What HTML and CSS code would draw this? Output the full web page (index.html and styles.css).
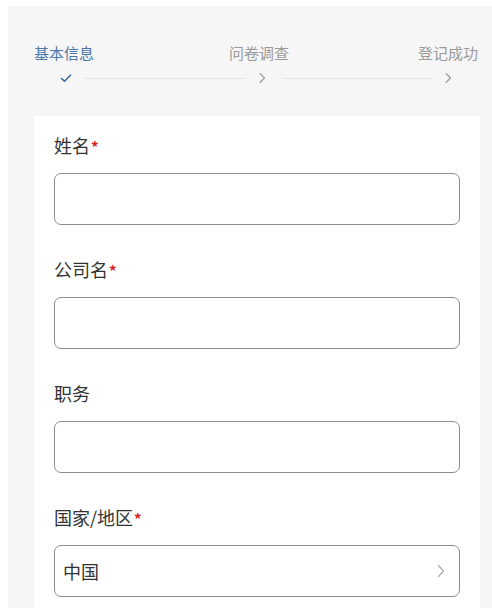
FILE: index.html
```html
<!DOCTYPE html>
<html lang="zh-CN">
<head>
<meta charset="utf-8">
<title>登记</title>
<link rel="stylesheet" href="styles.css">
</head>
<body>
<div class="page">
  <div class="steps">
    <div class="step-titles">
      <span class="step-title active">基本信息</span>
      <span class="step-title">问卷调查</span>
      <span class="step-title">登记成功</span>
    </div>
    <div class="step-icons">
      <svg class="step-icon" viewBox="0 0 12 12" width="12" height="12"><path d="M1.5 6.5 L4.5 9.2 L10.5 3.2" fill="none" stroke="#3f6aa0" stroke-width="1.6" stroke-linecap="round" stroke-linejoin="round"/></svg>
      <span class="step-line line-a"></span>
      <svg class="step-icon" viewBox="0 0 12 12" width="12" height="12"><path d="M4 1.5 L8.5 6 L4 10.5" fill="none" stroke="#999" stroke-width="1.1" stroke-linecap="round" stroke-linejoin="round"/></svg>
      <span class="step-line line-b"></span>
      <svg class="step-icon" viewBox="0 0 12 12" width="12" height="12"><path d="M4 1.5 L8.5 6 L4 10.5" fill="none" stroke="#999" stroke-width="1.1" stroke-linecap="round" stroke-linejoin="round"/></svg>
    </div>
  </div>
  <div class="card">
    <div class="field">
      <div class="label">姓名<span class="req">*</span></div>
      <div class="input"></div>
    </div>
    <div class="field">
      <div class="label">公司名<span class="req">*</span></div>
      <div class="input"></div>
    </div>
    <div class="field">
      <div class="label">职务</div>
      <div class="input"></div>
    </div>
    <div class="field">
      <div class="label">国家/地区<span class="req">*</span></div>
      <div class="input select">
        <span class="value">中国</span>
        <svg class="chev" viewBox="0 0 12 16" width="12" height="16"><path d="M3.5 2.5 L8.5 8 L3.5 13.5" fill="none" stroke="#aaa" stroke-width="1.2" stroke-linecap="round" stroke-linejoin="round"/></svg>
      </div>
    </div>
  </div>
</div>
</body>
</html>
```
FILE: styles.css
```css
html, body {
  margin: 0;
  padding: 0;
  background: #ffffff;
  height: 100%;
  overflow: hidden;
}
body {
  font-family: "Noto Sans", "Noto Sans CJK SC", sans-serif;
  color: #333;
}
.page {
  margin: 6px 0 0 8px;
  background: #f6f6f7;
  padding: 36px 12px 0 26px;
  min-height: 700px;
}
.steps {
  display: flex;
  flex-direction: column;
  gap: 9px;
  margin-bottom: 32px;
}
.step-titles {
  display: flex;
  justify-content: space-between;
  padding-right: 2px;
}
.step-title {
  font-size: 15px;
  line-height: 21px;
  color: #9a9a9a;
  font-family: "Noto Sans CJK SC", sans-serif;
}
.step-title.active {
  color: #4a76a8;
}
.step-title:nth-child(2) {
  margin-left: 6px;
}
.step-icons {
  display: flex;
  align-items: center;
  padding: 0 26px;
  height: 12px;
}
.step-icon {
  flex: none;
  display: block;
}
.step-line {
  height: 1px;
  background: #e4e4e4;
}
.line-a {
  flex: 163;
  margin: 0 10px 0 12px;
}
.line-b {
  flex: 149;
  margin: 0 11px 0 14px;
}
.card {
  background: #ffffff;
  padding: 17px 20px 40px 20px;
  display: flex;
  flex-direction: column;
  gap: 32px;
}
.field {
  display: flex;
  flex-direction: column;
  gap: 16px;
}
.label {
  font-family: "Noto Sans CJK SC", sans-serif;
  font-size: 18px;
  line-height: 24px;
  height: 24px;
  color: #333;
}
.req {
  color: #d9211c;
  font-size: 15px;
  font-weight: 700;
  line-height: 1;
  margin-left: 1px;
}
.input {
  height: 50px;
  border: 1px solid #8c8c8c;
  border-radius: 7px;
  background: #fff;
  box-sizing: content-box;
}
.select {
  display: flex;
  align-items: center;
  justify-content: space-between;
  padding: 0 12px 0 8px;
}
.value {
  font-family: "Noto Sans CJK SC", sans-serif;
  font-size: 18px;
  color: #333;
}
.chev {
  display: block;
}
```
